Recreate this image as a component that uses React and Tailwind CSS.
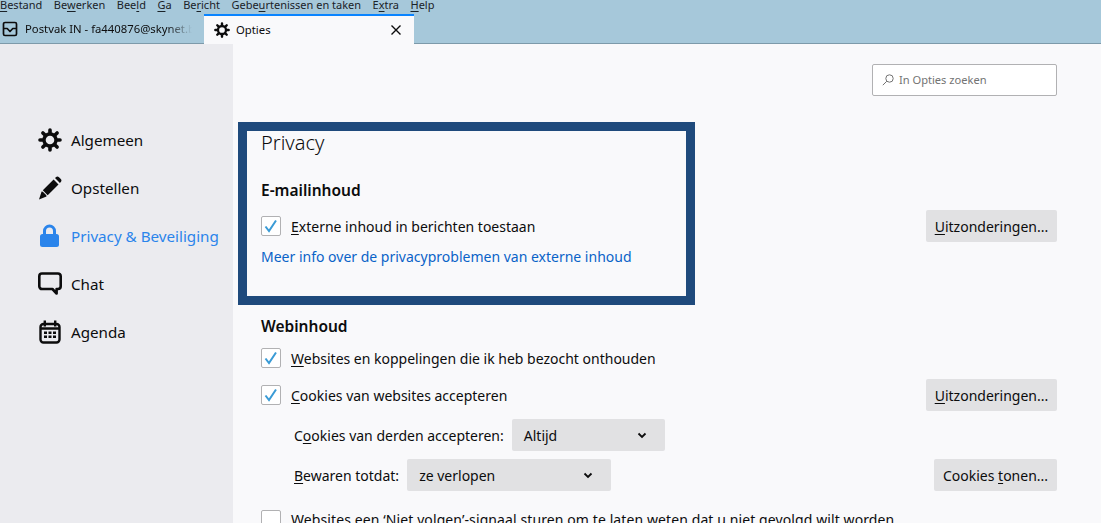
const menus = [
  ['', 'B', 'estand'],
  ['Be', 'w', 'erken'],
  ['Bee', 'l', 'd'],
  ['', 'G', 'a'],
  ['Be', 'r', 'icht'],
  ['Gebe', 'u', 'rtenissen en taken'],
  ['E', 'x', 'tra'],
  ['', 'H', 'elp'],
]

function Key({ before = '', letter, after = '' }) {
  return (
    <span>
      {before}
      <u className="underline-offset-2">{letter}</u>
      {after}
    </span>
  )
}

function GearIcon({ className }) {
  return (
    <svg viewBox="0 0 24 24" className={className}>
      <g stroke="currentColor" strokeWidth="3.600" strokeLinecap="round">
        <path d="M12 2v3M12 19v3M2 12h3M19 12h3M4.900 4.900l2.100 2.100M17 17l2.100 2.100M4.900 19.100L7 17M17 7l2.100-2.100" />
      </g>
      <circle cx="12" cy="12" r="6" fill="none" stroke="currentColor" strokeWidth="3.400" />
    </svg>
  )
}

function PencilIcon({ className }) {
  return (
    <svg viewBox="0 0 24 24" className={className}>
      <path fill="currentColor" d="M1 23.500l2.600-8 1.200.2 3.500 3.500.2 1.200zM4.800 14.300L15.600 3.500l4.900 4.900L9.700 19.200z" />
      <path fill="currentColor" d="M17 2.100l.9-.9c.9-.9 2.200-.9 3.100 0l1.800 1.800c.9.9.9 2.200 0 3.100l-.9.9z" />
    </svg>
  )
}

function LockIcon({ className }) {
  return (
    <svg viewBox="0 0 24 24" className={className}>
      <path fill="none" stroke="currentColor" strokeWidth="3" d="M6.500 12V7a5 5 0 0 1 10 0v5" />
      <rect x="2" y="10" width="19" height="13" rx="2.500" fill="currentColor" />
    </svg>
  )
}

function ChatIcon({ className }) {
  return (
    <svg viewBox="0 0 24 24" className={className}>
      <path
        fill="none"
        stroke="currentColor"
        strokeWidth="2.600"
        strokeLinejoin="round"
        d="M4 1.500h16a2.700 2.700 0 0 1 2.700 2.700v10.100a2.700 2.700 0 0 1-2.700 2.700h-1.400v4.500l-4.200-4.500H4a2.700 2.700 0 0 1-2.700-2.700V4.200A2.700 2.700 0 0 1 4 1.500z"
      />
    </svg>
  )
}

function CalendarIcon({ className }) {
  return (
    <svg viewBox="0 0 24 24" className={className}>
      <rect x="2.500" y="4" width="19" height="18.500" rx="3" fill="none" stroke="currentColor" strokeWidth="2.400" />
      <path stroke="currentColor" strokeWidth="2.400" d="M6.800 0.500v6M17.200 0.500v6M2.500 8.500h19" />
      <path
        fill="currentColor"
        d="M6 11.500h3v2.500H6zM10.500 11.500h3v2.500h-3zM15 11.500h3v2.500h-3zM6 15.500h3V18H6zM10.500 15.500h3V18h-3zM15 15.500h3V18h-3z"
      />
    </svg>
  )
}

function InboxIcon({ className }) {
  return (
    <svg viewBox="0 0 16 16" className={className}>
      <path
        fill="none"
        stroke="currentColor"
        strokeWidth="1.700"
        strokeLinejoin="round"
        d="M3 1.500h10A1.500 1.500 0 0 1 14.500 3v10a1.500 1.500 0 0 1-1.500 1.500H3A1.500 1.500 0 0 1 1.500 13V3A1.500 1.500 0 0 1 3 1.500zM1.500 7.500h3.700L8 10.500l2.800-3h3.700"
      />
    </svg>
  )
}

function Checkbox({ checked = true }) {
  return (
    <span className="flex h-5 w-5 shrink-0 items-center justify-center rounded-[2px] border border-[#b1b1b3] bg-white">
      {checked && (
        <svg viewBox="0 0 16 16" className="h-4 w-4">
          <path d="M2.500 8.500l3.500 4.500 7-10.500" fill="none" stroke="#3a9bd6" strokeWidth="2" />
        </svg>
      )}
    </span>
  )
}

function Button({ children, className = '' }) {
  return (
    <div className={`flex h-8 items-center justify-center rounded-[2px] bg-[#e1e1e3] ${className}`}>
      {children}
    </div>
  )
}

function Select({ value, className = '' }) {
  return (
    <div className={`flex h-8 items-center justify-between rounded-[2px] bg-[#e1e1e3] pl-3 pr-[18px] ${className}`}>
      <span>{value}</span>
      <svg viewBox="0 0 10 10" className="h-2.5 w-2.5">
        <path d="M1.500 3.500L5 7l3.500-3.500" fill="none" stroke="#0c0c0d" strokeWidth="1.800" />
      </svg>
    </div>
  )
}

const navItems = [
  { label: 'Algemeen', Icon: GearIcon },
  { label: 'Opstellen', Icon: PencilIcon },
  { label: 'Privacy & Beveiliging', Icon: LockIcon, active: true },
  { label: 'Chat', Icon: ChatIcon },
  { label: 'Agenda', Icon: CalendarIcon },
]

export default function App() {
  return (
    <div className="relative flex h-[523px] w-[1101px] flex-col overflow-hidden bg-[#f9f9fb] font-['Noto_Sans',sans-serif] text-[#0c0c0d]">
      {/* titlebar: menu is cut off by the window top */}
      <div className="h-[44px] shrink-0 border-b border-[#7d9aaa] bg-[#a6c8da]">
        <div className="-mt-[5px] flex h-[19px] items-center gap-[11.500px] text-[11px] leading-[16px] text-[#1a2228]">
          {menus.map(([before, letter, after]) => (
            <Key key={before + letter + after} before={before} letter={letter} after={after} />
          ))}
        </div>
        <div className="flex h-[30px]">
          <div className="flex w-[204px] items-center pl-[2px] text-[11.300px]">
            <InboxIcon className="h-4 w-4 shrink-0" />
            <span className="ml-[7px] w-[167px] overflow-hidden whitespace-nowrap [mask-image:linear-gradient(to_right,black_85%,transparent)]">
              Postvak IN - fa440876@skynet.be
            </span>
          </div>
          <div className="flex h-[30px] w-[210px] items-center border-t-2 border-[#0a84ff] bg-[#f9f9fb] pl-[10px] pr-[12px] text-[11.300px]">
            <GearIcon className="h-4 w-4 shrink-0" />
            <span className="ml-[6px] flex-1">Opties</span>
            <svg viewBox="0 0 12 12" className="h-3 w-3">
              <path d="M1.500 1.500l9 9M10.500 1.500l-9 9" stroke="#0c0c0d" strokeWidth="1.400" />
            </svg>
          </div>
        </div>
      </div>

      <div className="flex min-h-0 flex-1">
        <nav className="flex w-[233px] shrink-0 flex-col gap-[18px] bg-[#ebebef] pl-[38px] pt-[81px]">
          {navItems.map(({ label, Icon, active }) => (
            <div
              key={label}
              className={`flex h-[30px] items-center gap-[9px] text-[15.200px] ${active ? 'text-[#2a84eb]' : ''}`}
            >
              <Icon className="h-6 w-6 shrink-0" />
              <span>{label}</span>
            </div>
          ))}
        </nav>

        <main className="flex min-w-0 flex-1 flex-col pl-[28px] pr-[44px] pt-[20px] text-[14px] [&>*]:shrink-0">
          <div className="flex justify-end">
            <div className="flex h-8 w-[185px] items-center gap-[5px] rounded-[2px] border border-[#b1b1b3] bg-white pl-[9px] text-[11.100px] text-[#737373]">
              <svg viewBox="0 0 12 12" className="h-3 w-3">
                <circle cx="7.500" cy="4.500" r="3.700" fill="none" stroke="#737373" strokeWidth="1" />
                <path d="M4.800 7.200L0.800 11.200" stroke="#737373" strokeWidth="1" />
              </svg>
              In Opties zoeken
            </div>
          </div>

          <h1 className="mt-[30px] text-[20px] leading-[34px] font-light">Privacy</h1>
          <h2 className="mt-[18px] text-[15.500px] leading-[24px] font-semibold">E-mailinhoud</h2>
          <div className="mt-[8px] flex h-8 items-center justify-between">
            <div className="flex items-center gap-[10px]">
              <Checkbox />
              <Key letter="E" after="xterne inhoud in berichten toestaan" />
            </div>
            <Button className="w-[131px]">
              <Key letter="U" after="itzonderingen..." />
            </Button>
          </div>
          <a className="mt-[3px] leading-[24px] text-[#0a63c8]">Meer info over de privacyproblemen van externe inhoud</a>

          <h2 className="mt-[45px] text-[15.500px] leading-[24px] font-semibold">Webinhoud</h2>
          <div className="mt-[4px] flex h-8 items-center gap-[10px]">
            <Checkbox />
            <Key letter="W" after="ebsites en koppelingen die ik heb bezocht onthouden" />
          </div>
          <div className="mt-[5px] flex h-8 items-center justify-between">
            <div className="flex items-center gap-[10px]">
              <Checkbox />
              <Key letter="C" after="ookies van websites accepteren" />
            </div>
            <Button className="w-[131px]">
              <Key letter="U" after="itzonderingen..." />
            </Button>
          </div>
          <div className="mt-[8px] flex h-8 items-center gap-[8px] pl-[33px]">
            <Key before="C" letter="o" after="okies van derden accepteren:" />
            <Select value="Altijd" className="w-[153px]" />
          </div>
          <div className="mt-[8px] flex h-8 items-center justify-between pl-[33px]">
            <div className="flex items-center gap-[8px]">
              <Key letter="B" after="ewaren totdat:" />
              <Select value="ze verlopen" className="w-[204px]" />
            </div>
            <Button className="w-[123px]">
              <Key before="Cookies " letter="t" after="onen..." />
            </Button>
          </div>
          <div className="mt-[18px] flex items-center gap-[10px] tracking-[0.1px]">
            <Checkbox checked={false} />
            <Key letter="W" after="ebsites een ‘Niet volgen’-signaal sturen om te laten weten dat u niet gevolgd wilt worden" />
          </div>
        </main>
      </div>

      {/* annotation frame drawn over the screenshot */}
      <div className="absolute left-[238px] top-[122px] h-[183px] w-[457px] border-[9px] border-[#1f4a7c]" />
    </div>
  )
}
